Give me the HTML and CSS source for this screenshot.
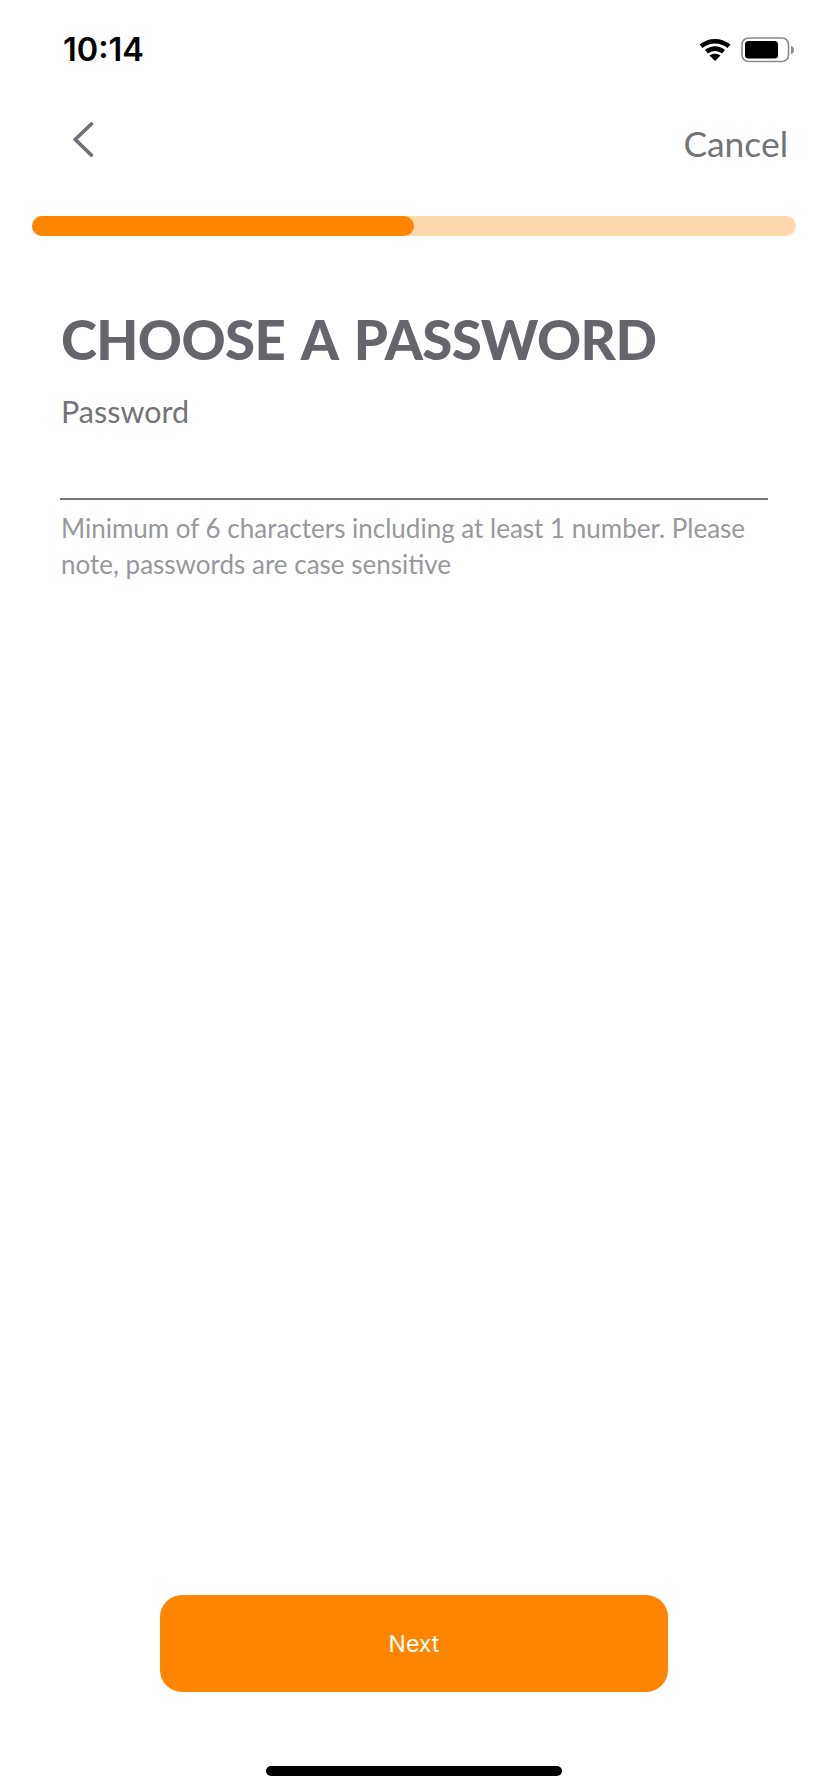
FILE: index.html
```html
<!DOCTYPE html>
<html lang="en">
<head>
    <meta charset="UTF-8">
    <meta name="viewport" content="width=device-width, initial-scale=1.0">
    <title>Choose a password</title>
    <link rel="stylesheet" href="styles.css">
</head>
<body>
    <div class="screen">
        <div class="status-bar">
            <span class="time">10:14</span>
            <div class="status-icons">
                <svg class="wifi" width="32" height="24" viewBox="0 0 32 24">
                    <path d="M0.5 7.5 C9 0 23 0 31.500 7.500 L28.500 11 C21.500 5 10.500 5 3.500 11 Z" fill="#000"/>
                    <path d="M6 13 C12 8 20 8 26 13 L23 16.500 C19 13 13 13 9 16.500 Z" fill="#000"/>
                    <path d="M16 24 L10.500 18.500 C13.500 16 18.500 16 21.500 18.500 Z" fill="#000"/>
                </svg>
                <svg class="battery" width="54" height="26" viewBox="0 0 54 26">
                    <rect x="1" y="1" width="46.500" height="23.500" rx="6.500" fill="none" stroke="#8a8a8a" stroke-width="1.600"/>
                    <rect x="4" y="4" width="33" height="17.500" rx="3.500" fill="#000"/>
                    <path d="M50 9 C52 9.500 53 11 53 13 C53 15 52 16.500 50 17 Z" fill="#8a8a8a"/>
                </svg>
            </div>
        </div>

        <div class="nav">
            <svg class="back" width="24" height="38" viewBox="0 0 24 38">
                <path d="M19.300 2 L3.200 17.500 L19.300 33" fill="none" stroke="#707176" stroke-width="3.800" stroke-linecap="round" stroke-linejoin="round"/>
            </svg>
            <span class="cancel">Cancel</span>
        </div>

        <div class="progress">
            <div class="progress-fill" style="width: 50%"></div>
        </div>

        <div class="content">
            <h1 class="title">CHOOSE A PASSWORD</h1>
            <label class="field-label">Password</label>
            <div class="field-line"></div>
            <p class="hint">Minimum of 6 characters including at least 1 number. Please note, passwords are case sensitive</p>
        </div>

        <div class="actions">
            <button class="next">Next</button>
        </div>

        <div class="home-bar"></div>
    </div>
</body>
</html>
```

FILE: styles.css
```css
* {
    margin: 0;
    padding: 0;
    box-sizing: border-box;
    font-family: 'Lato', 'Liberation Sans', sans-serif;
}

body {
    background: #fff;
}

.screen {
    height: 100vh;
    display: flex;
    flex-direction: column;
}

.status-bar {
    height: 100px;
    padding: 30px 33px 0 63px;
    display: flex;
    justify-content: space-between;
    align-items: flex-start;
}

.time {
    font-family: 'Inter', sans-serif;
    font-size: 32.500px;
    font-weight: 600;
    line-height: 40px;
    color: #000;
}

.status-icons {
    display: flex;
    gap: 10px;
    padding-top: 7px;
}

.nav {
    height: 116px;
    padding: 22px 40px 0 72px;
    display: flex;
    justify-content: space-between;
    align-items: flex-start;
}

.cancel {
    font-size: 35.400px;
    line-height: 40px;
    margin-top: 2px;
    color: #737478;
}

.progress {
    margin: 0 32px;
    height: 20px;
    border-radius: 10px;
    background: #ffd8ae;
}

.progress-fill {
    height: 100%;
    border-radius: 10px;
    background: #ff8500;
}

.content {
    flex: 1;
    padding: 69px 60px 0 60px;
}

.title {
    font-size: 54.500px;
    font-weight: 900;
    line-height: 68px;
    letter-spacing: -0.6px;
    word-spacing: 5px;
    color: #65666c;
    padding-left: 1px;
}

.field-label {
    display: block;
    margin-top: 20px;
    padding-left: 1px;
    font-size: 30.500px;
    line-height: 36px;
    color: #737478;
}

.field-line {
    margin-top: 69px;
    height: 2px;
    background: #77787c;
}

.hint {
    margin-top: 10px;
    padding-left: 1px;
    font-size: 26px;
    line-height: 36px;
    color: #97989c;
}

.actions {
    display: flex;
    justify-content: center;
    padding-bottom: 74px;
}

.next {
    width: 508px;
    height: 97px;
    border: none;
    border-radius: 22px;
    background: #ff8500;
    color: #fff;
    font-family: 'Inter', sans-serif;
    font-size: 23px;
}

.home-bar {
    width: 296px;
    height: 10px;
    margin: 0 auto 16px;
    border-radius: 5px;
    background: #000;
}
```
